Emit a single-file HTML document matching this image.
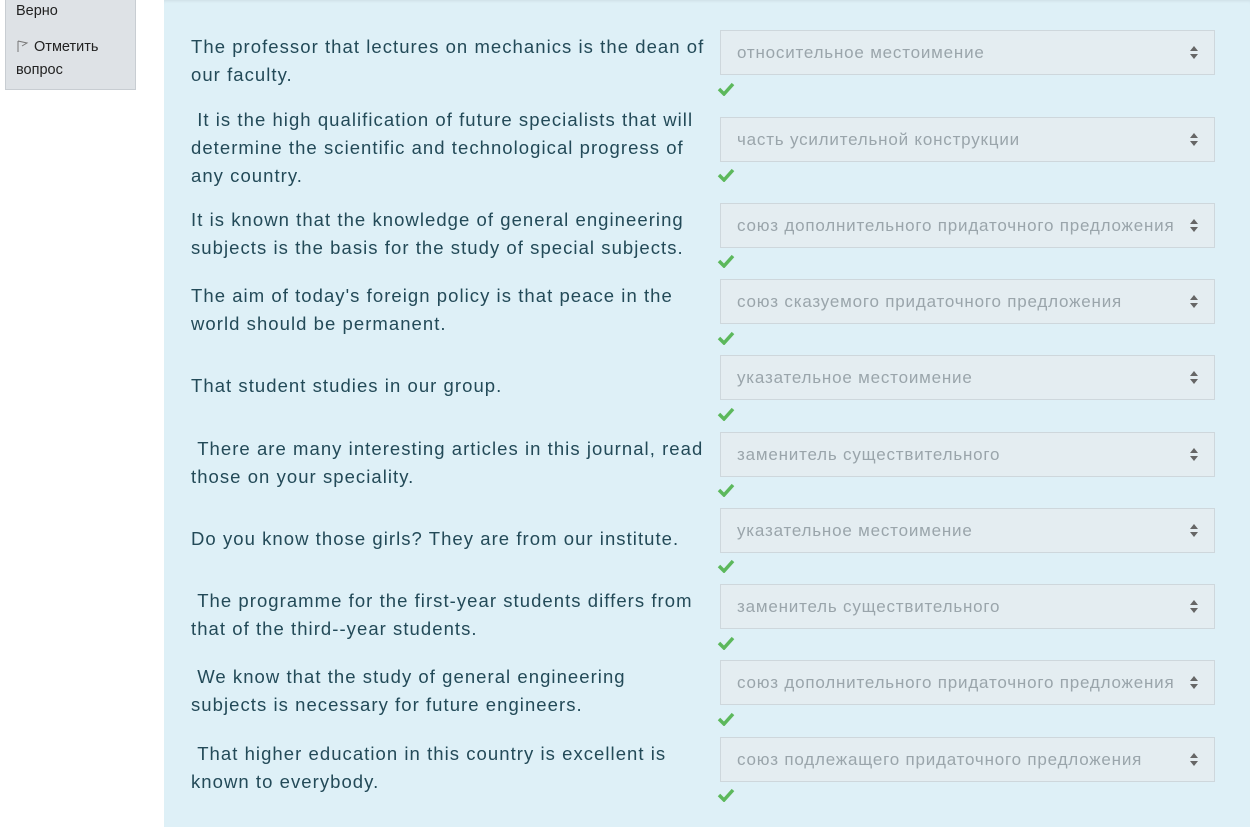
<!DOCTYPE html>
<html><head><meta charset="utf-8"><style>
body{margin:0;width:1250px;height:827px;background:#fff;position:relative;overflow:hidden;font-family:"Liberation Sans",sans-serif}
.side{position:absolute;left:5px;top:-2px;width:129px;height:90px;background:#dee2e6;border:1px solid #c8cdd2;font-size:14.5px;color:#222}
.main{position:absolute;left:164px;top:0;width:1086px;height:827px;background:#def0f7;box-shadow:inset 0 3px 3px -2px rgba(0,0,0,.08)}
.t{position:absolute;left:191px;width:540px;font-size:18.5px;line-height:28px;color:#234a58;letter-spacing:1.05px;white-space:nowrap}
.s{position:absolute;left:720px;width:495px;height:45px;background:#e4edf1;border:1px solid #ced7dc;box-sizing:border-box;color:#9aa5ab;font-size:17px;letter-spacing:0.8px;line-height:43px;padding-left:16px;white-space:nowrap}
.s:after{content:"";position:absolute;right:16px;top:15px;border:4px solid transparent;border-bottom:5px solid #666;border-top:0}
.s:before{content:"";position:absolute;right:16px;top:23px;border:4px solid transparent;border-top:5px solid #666;border-bottom:0}
.c{position:absolute;left:717px;width:18px;height:14px}
</style></head><body>
<div class="side"><div style="position:absolute;left:10px;top:4px">Верно</div>
<div style="position:absolute;left:10px;top:37px;line-height:23px"><svg width="14" height="14" viewBox="0 0 14 14" style="vertical-align:-2px"><path d="M2 2v11M2 2l9 2-5 3" fill="none" stroke="#777" stroke-width="1"/></svg> Отметить<br>вопрос</div></div>
<div class="main"></div>

<div class="t" style="top:33px">The professor that lectures on mechanics is the dean of<br>our faculty.</div>
<div class="s" style="top:30px">относительное местоимение</div>
<div class="t" style="top:106px">&nbsp;It is the high qualification of future specialists that will<br>determine the scientific and technological progress of<br>any country.</div>
<div class="s" style="top:117px">часть усилительной конструкции</div>
<div class="t" style="top:206px">It is known that the knowledge of general engineering<br>subjects is the basis for the study of special subjects.</div>
<div class="s" style="top:203px">союз дополнительного придаточного предложения</div>
<div class="t" style="top:282px">The aim of today's foreign policy is that peace in the<br>world should be permanent.</div>
<div class="s" style="top:279px">союз сказуемого придаточного предложения</div>
<div class="t" style="top:372px">That student studies in our group.</div>
<div class="s" style="top:355px">указательное местоимение</div>
<div class="t" style="top:435px">&nbsp;There are many interesting articles in this journal, read<br>those on your speciality.</div>
<div class="s" style="top:432px">заменитель существительного</div>
<div class="t" style="top:525px">Do you know those girls? They are from our institute.</div>
<div class="s" style="top:508px">указательное местоимение</div>
<div class="t" style="top:587px">&nbsp;The programme for the first-year students differs from<br>that of the third--year students.</div>
<div class="s" style="top:584px">заменитель существительного</div>
<div class="t" style="top:663px">&nbsp;We know that the study of general engineering<br>subjects is necessary for future engineers.</div>
<div class="s" style="top:660px">союз дополнительного придаточного предложения</div>
<div class="t" style="top:740px">&nbsp;That higher education in this country is excellent is<br>known to everybody.</div>
<div class="s" style="top:737px">союз подлежащего придаточного предложения</div>

<svg class="c" style="top:82px" viewBox="0 0 18 14"><path d="M2 7l5 5 9-10" fill="none" stroke="#5cb85c" stroke-width="3.5"/></svg>
<svg class="c" style="top:168px" viewBox="0 0 18 14"><path d="M2 7l5 5 9-10" fill="none" stroke="#5cb85c" stroke-width="3.5"/></svg>
<svg class="c" style="top:254px" viewBox="0 0 18 14"><path d="M2 7l5 5 9-10" fill="none" stroke="#5cb85c" stroke-width="3.5"/></svg>
<svg class="c" style="top:331px" viewBox="0 0 18 14"><path d="M2 7l5 5 9-10" fill="none" stroke="#5cb85c" stroke-width="3.5"/></svg>
<svg class="c" style="top:407px" viewBox="0 0 18 14"><path d="M2 7l5 5 9-10" fill="none" stroke="#5cb85c" stroke-width="3.5"/></svg>
<svg class="c" style="top:483px" viewBox="0 0 18 14"><path d="M2 7l5 5 9-10" fill="none" stroke="#5cb85c" stroke-width="3.5"/></svg>
<svg class="c" style="top:559px" viewBox="0 0 18 14"><path d="M2 7l5 5 9-10" fill="none" stroke="#5cb85c" stroke-width="3.5"/></svg>
<svg class="c" style="top:636px" viewBox="0 0 18 14"><path d="M2 7l5 5 9-10" fill="none" stroke="#5cb85c" stroke-width="3.5"/></svg>
<svg class="c" style="top:712px" viewBox="0 0 18 14"><path d="M2 7l5 5 9-10" fill="none" stroke="#5cb85c" stroke-width="3.5"/></svg>
<svg class="c" style="top:788px" viewBox="0 0 18 14"><path d="M2 7l5 5 9-10" fill="none" stroke="#5cb85c" stroke-width="3.5"/></svg>
</body></html>
